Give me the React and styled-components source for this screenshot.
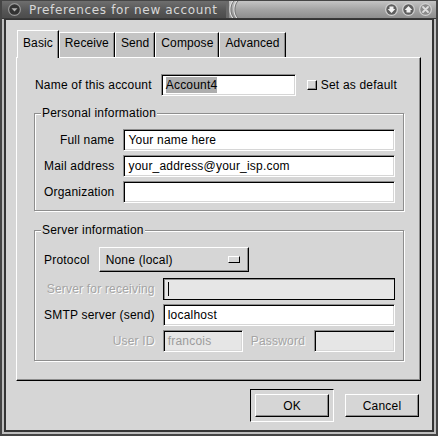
import React from "react";
import styled, { createGlobalStyle } from "styled-components";

const GlobalStyle = createGlobalStyle`
  html, body {
    margin: 0;
    padding: 0;
    background: #d6d6d6;
  }
  body {
    font-family: "Liberation Sans", Arial, sans-serif;
    font-size: 12px;
    letter-spacing: 0.2px;
    color: #000;
  }
`;

const Window = styled.div`
  width: 438px;
  height: 436px;
  box-sizing: border-box;
  border: 2px solid #454545;
  border-top-width: 1px;
  display: flex;
  flex-direction: column;
  background: #d6d6d6;
`;

const TitleBar = styled.div`
  height: 18px;
  flex: none;
  display: flex;
  box-sizing: border-box;
  border-bottom: 1px solid #383838;
`;

const TitleLeft = styled.div`
  width: 224px;
  display: flex;
  align-items: center;
  background: linear-gradient(#6e6e6e, #555555 60%, #4c4c4c);
  padding-left: 5px;
  box-sizing: border-box;
`;

const TitleText = styled.span`
  margin-left: 7px;
  font-family: "DejaVu Sans", sans-serif;
  font-size: 12px;
  letter-spacing: 0.65px;
  color: #d8d8d8;
  white-space: nowrap;
`;

const TitleRight = styled.div`
  flex: 1;
  display: flex;
  align-items: center;
  background: linear-gradient(#c4c4c4, #a4a4a4 50%, #8e8e8e);
  padding-right: 3px;
`;

const Grip = styled.svg`
  flex: none;
  margin-right: auto;
`;

const TitleButtons = styled.div`
  display: flex;
  gap: 2px;
`;

const Body = styled.div`
  flex: 1;
  display: flex;
  border: solid #bdbdbd;
  border-width: 0 2px 2px 2px;
`;

const BodyInner = styled.div`
  flex: 1;
  display: flex;
  flex-direction: column;
  border: solid #343434;
  border-width: 1px 2px 2px 2px;
  padding: 10px 11px 0 10px;
`;

const TabRow = styled.div`
  display: flex;
  align-items: flex-end;
  height: 27px;
  padding-left: 1px;
`;

const Tab = styled.div`
  position: relative;
  z-index: ${(p) => (p.active ? 1 : 0)};
  height: ${(p) => (p.active ? 28 : 25)}px;
  margin-bottom: ${(p) => (p.active ? -1 : 0)}px;
  box-sizing: border-box;
  padding: ${(p) => (p.active ? "5px" : "3px")} 5px 0 5px;
  line-height: 14px;
  letter-spacing: 0.1px;
  background: ${(p) => (p.active ? "#d6d6d6" : "#c4c4c4")};
  border-style: solid;
  border-color: #fff #000 #000 #fff;
  border-width: 1px 1px 0 1px;
  box-shadow: inset -1px 0 0 #8c8c8c;
`;

const Panel = styled.div`
  height: 324px;
  box-sizing: border-box;
  border: 1px solid;
  border-color: #fff #000 #000 #fff;
  box-shadow: inset -1px -1px 0 #8c8c8c;
  padding: 16px 16px 0 17px;
  display: flex;
  flex-direction: column;
`;

const NameRow = styled.div`
  display: flex;
  align-items: center;
  height: 22px;
  margin-left: 1px;
`;

const Label = styled.span`
  white-space: nowrap;
  text-align: right;
  color: ${(p) => (p.disabled ? "#a4a4a4" : "#000")};
  text-shadow: ${(p) => (p.disabled ? "1px 1px 0 #fff" : "none")};
`;

const Entry = styled.div`
  box-sizing: border-box;
  height: 22px;
  width: ${(p) => (p.width ? `${p.width}px` : "auto")};
  margin-left: ${(p) => p.gap || 0}px;
  display: flex;
  align-items: center;
  padding-left: 4px;
  white-space: nowrap;
  overflow: hidden;
  background: ${(p) => (p.disabled ? "#e6e6e6" : "#fff")};
  color: ${(p) => (p.disabled ? "#9c9c9c" : "#000")};
  border: 1px solid;
  border-color: ${(p) => (p.focused ? "#000" : "#8c8c8c #fff #fff #8c8c8c")};
  box-shadow: ${(p) =>
    p.focused
      ? "inset 1px 1px 0 #8c8c8c"
      : "inset 1px 1px 0 #000, inset -1px -1px 0 #d6d6d6"};
`;

const Selected = styled.span`
  background: #aeaeae;
  line-height: 16px;
`;

const Cursor = styled.span`
  width: 1px;
  height: 14px;
  background: #000;
`;

const Check = styled.span`
  width: 10px;
  height: 10px;
  box-sizing: border-box;
  margin: 0 4px 0 11px;
  border: 1px solid;
  border-color: #fff #000 #000 #fff;
  box-shadow: inset -1px -1px 0 #8c8c8c;
  background: #d6d6d6;
`;

const Frame = styled.div`
  margin-top: ${(p) => p.top}px;
  border: 1px solid #8e8e8e;
  box-shadow: inset 1px 1px 0 #fff, 1px 1px 0 #fff;
  padding: 0 8px ${(p) => p.bottom}px 9px;
`;

const Legend = styled.div`
  width: fit-content;
  margin: -8px 0 0 -3px;
  padding: 0 1px;
  line-height: 14px;
  background: #d6d6d6;
`;

const FieldGrid = styled.div`
  display: grid;
  grid-template-columns: auto 1fr;
  column-gap: ${(p) => p.gap}px;
  row-gap: 4px;
  align-items: center;
  margin-top: ${(p) => p.top}px;
`;

const PairRow = styled.div`
  display: flex;
  align-items: center;
  gap: 8px;
`;

const ProtocolRow = styled.div`
  display: flex;
  align-items: center;
  gap: 9px;
  margin: 10px 0 0 0;
`;

const OptionMenu = styled.div`
  width: 150px;
  height: 25px;
  box-sizing: border-box;
  display: flex;
  align-items: center;
  justify-content: space-between;
  padding: 0 8px 0 6px;
  border: 1px solid;
  border-color: #fff #000 #000 #fff;
  box-shadow: inset -1px -1px 0 #8c8c8c;
`;

const Indicator = styled.span`
  width: 12px;
  height: 7px;
  box-sizing: border-box;
  border: 1px solid;
  border-color: #fff #000 #000 #fff;
`;

const ButtonRow = styled.div`
  display: flex;
  justify-content: flex-end;
  align-items: center;
  gap: 11px;
  margin-top: 8px;
  padding-right: 2px;
`;

const DefaultFrame = styled.div`
  padding: 4px;
  border: 1px solid;
  border-color: #000 #fff #fff #000;
`;

const Button = styled.div`
  width: 74px;
  height: 23px;
  box-sizing: border-box;
  display: flex;
  align-items: center;
  justify-content: center;
  border: 1px solid;
  border-color: #fff #000 #000 #fff;
  box-shadow: inset -1px -1px 0 #8c8c8c;
`;

function RoundButton({ glyph }) {
  return (
    <svg width="15" height="15" viewBox="0 0 15 15">
      <circle cx="7.5" cy="7.5" r="6.5" fill="#cfcfcf" />
      <circle cx="7.5" cy="7.5" r="5.2" fill={glyph === "close" ? "#8a8a8a" : "#5e5e5e"} />
      {glyph === "down" && <path d="M5.5 4.5h4v2.5h1.8L7.5 11 3.7 7h1.8z" fill="#f2f2f2" />}
      {glyph === "up" && <path d="M5.5 10.5h4V8h1.8L7.5 4 3.7 8h1.8z" fill="#f2f2f2" />}
      {glyph === "close" && (
        <path d="M5 5l5 5M10 5l-5 5" stroke="#dedede" strokeWidth="1.8" strokeLinecap="round" />
      )}
    </svg>
  );
}

export default function App() {
  return (
    <>
      <GlobalStyle />
      <Window>
        <TitleBar>
          <TitleLeft>
            <svg width="15" height="15" viewBox="0 0 15 15">
              <circle cx="7.5" cy="7.5" r="6.5" fill="#9a9a9a" />
              <circle cx="7.5" cy="7.5" r="5.3" fill="#333" />
              <path d="M4.5 6.2h6L7.5 9.5z" fill="#b4b4b4" />
            </svg>
            <TitleText>Preferences for new account</TitleText>
          </TitleLeft>
          <TitleRight>
            <Grip width="16" height="17" viewBox="0 0 16 17">
              <rect width="3" height="17" fill="#6a6a6a" />
              <path d="M7 0C3 4 3 13 7 17" stroke="#e0e0e0" strokeWidth="1.2" fill="none" />
              <path d="M11 0C7 4 7 13 11 17" stroke="#e0e0e0" strokeWidth="1.2" fill="none" />
              <path d="M8 0C4 4 4 13 8 17" stroke="#777" strokeWidth="1" fill="none" />
              <path d="M12 0C8 4 8 13 12 17" stroke="#777" strokeWidth="1" fill="none" />
            </Grip>
            <TitleButtons>
              <RoundButton glyph="down" />
              <RoundButton glyph="up" />
              <RoundButton glyph="close" />
            </TitleButtons>
          </TitleRight>
        </TitleBar>
        <Body>
          <BodyInner>
            <TabRow>
              <Tab active>Basic</Tab>
              <Tab>Receive</Tab>
              <Tab>Send</Tab>
              <Tab>Compose</Tab>
              <Tab>Advanced</Tab>
            </TabRow>
            <Panel>
              <NameRow>
                <Label>Name of this account</Label>
                <Entry width={135} gap={9}>
                  <Selected>Account4</Selected>
                </Entry>
                <Check />
                <Label>Set as default</Label>
              </NameRow>

              <Frame top={17} bottom={7}>
                <Legend>Personal information</Legend>
                <FieldGrid top={9} gap={9}>
                  <Label>Full name</Label>
                  <Entry>Your name here</Entry>
                  <Label>Mail address</Label>
                  <Entry>your_address@your_isp.com</Entry>
                  <Label>Organization</Label>
                  <Entry />
                </FieldGrid>
              </Frame>

              <Frame top={19} bottom={8}>
                <Legend>Server information</Legend>
                <ProtocolRow>
                  <Label>Protocol</Label>
                  <OptionMenu>
                    None (local)
                    <Indicator />
                  </OptionMenu>
                </ProtocolRow>
                <FieldGrid top={6} gap={8}>
                  <Label disabled>Server for receiving</Label>
                  <Entry disabled focused>
                    <Cursor />
                  </Entry>
                  <Label>SMTP server (send)</Label>
                  <Entry>localhost</Entry>
                  <Label disabled>User ID</Label>
                  <PairRow>
                    <Entry disabled width={80}>francois</Entry>
                    <Label disabled>Password</Label>
                    <Entry disabled style={{ flex: 1 }} gap={1} />
                  </PairRow>
                </FieldGrid>
              </Frame>
            </Panel>
            <ButtonRow>
              <DefaultFrame>
                <Button>OK</Button>
              </DefaultFrame>
              <Button>Cancel</Button>
            </ButtonRow>
          </BodyInner>
        </Body>
      </Window>
    </>
  );
}
